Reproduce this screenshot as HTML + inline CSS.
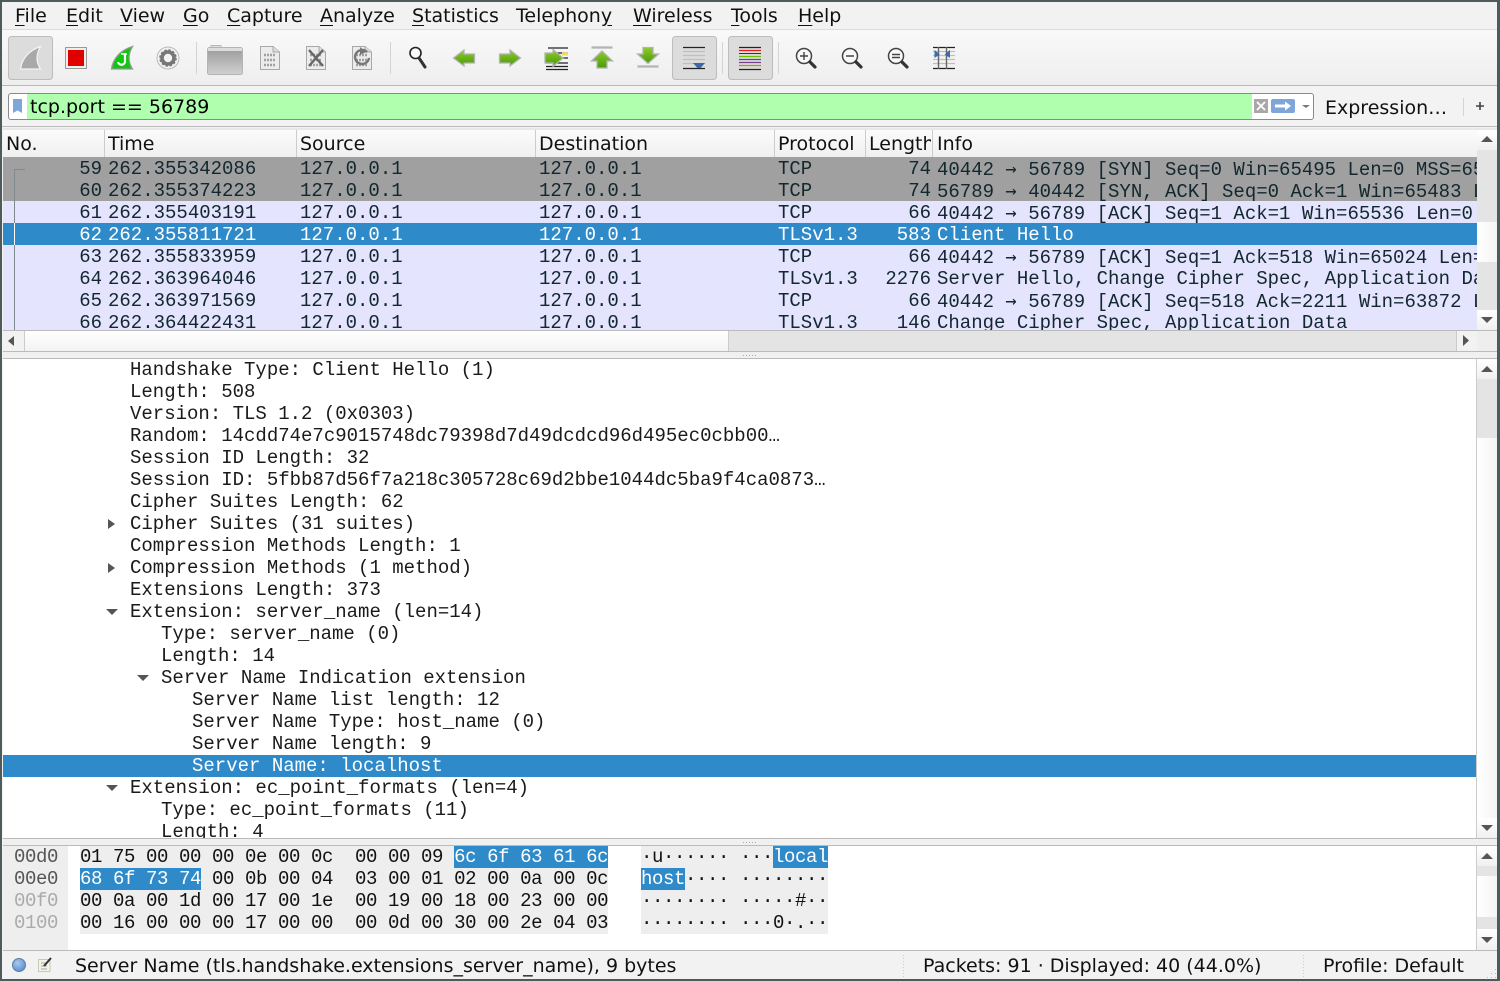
<!DOCTYPE html>
<html><head><meta charset="utf-8"><style>
html,body{margin:0;padding:0;width:1500px;height:981px;overflow:hidden;background:#4e5a5c}
*{box-sizing:border-box}
.a{position:absolute}
#w{position:absolute;left:2px;top:2px;width:1495px;height:977px;background:#f2f2f2;overflow:hidden}
#r{position:absolute;left:0;top:0;width:1500px;height:981px;font-family:"DejaVu Sans","Liberation Sans",sans-serif;font-size:19px;color:#111}
.m{position:absolute;top:4px;height:24px;line-height:24px;white-space:pre}
.m u{text-underline-offset:3px}
.h{position:absolute;top:131px;height:26px;line-height:27px;white-space:pre;overflow:hidden}
.s{position:absolute;top:130px;width:1px;height:27px;background:#ccc}
.row{position:absolute;left:3px;width:1474px;height:22px;overflow:hidden;font-family:"Liberation Mono",monospace;font-size:19px;line-height:24px;color:#12272e;white-space:pre}
.row span{position:absolute;top:0}
.row b{font-weight:normal;font-family:"DejaVu Sans Mono",monospace;font-size:18.9px}
.no{left:0;width:99px;text-align:right}.t{left:105px}.src{left:297px}.dst{left:536px}.pr{left:775px}.len{left:862px;width:66px;text-align:right}.inf{left:934px}
.g{background:#a0a0a0}.l{background:#e4e4ff}.sel{background:#2f8ac9;color:#fff}
.d{position:absolute;left:3px;width:1474px;height:22px;font-family:"Liberation Mono",monospace;font-size:19px;line-height:22px;color:#1a1a1a;white-space:pre;overflow:hidden}
.x{position:absolute;height:22px;font-family:"Liberation Mono",monospace;font-size:19px;letter-spacing:-.4px;line-height:22px;white-space:pre;color:#111}
.x i{font-style:normal}
.hs{background:#2f8ac9;color:#fff;display:inline-block;height:22px;line-height:22px;vertical-align:top}
.b{position:absolute;left:1477px;width:20px;height:20px;background:linear-gradient(#fff,#f0f0f0)}
.tr{position:absolute;background:#e4e4e4}
.hd{position:absolute;background:linear-gradient(90deg,#fff,#f4f4f4)}
</style></head><body>
<div id="w"></div>
<div id="r">
<!-- menu -->
<div class="m" style="left:15px"><u>F</u>ile</div>
<div class="m" style="left:66px"><u>E</u>dit</div>
<div class="m" style="left:120px"><u>V</u>iew</div>
<div class="m" style="left:183px"><u>G</u>o</div>
<div class="m" style="left:227px"><u>C</u>apture</div>
<div class="m" style="left:320px"><u>A</u>nalyze</div>
<div class="m" style="left:412px"><u>S</u>tatistics</div>
<div class="m" style="left:516px">Telephon<u>y</u></div>
<div class="m" style="left:633px"><u>W</u>ireless</div>
<div class="m" style="left:731px"><u>T</u>ools</div>
<div class="m" style="left:798px"><u>H</u>elp</div>
<!-- toolbar -->
<div class="a" style="left:2px;top:29px;width:1495px;height:57px;background:linear-gradient(#f9f9f9,#eeeeee);border-top:1px solid #ddd;border-bottom:1px solid #b8b8b8"></div>
<svg class="a" style="left:0;top:0" width="1500" height="90" viewBox="0 0 1500 90">
<defs>
<linearGradient id="gr" x1="0" y1="0" x2="0" y2="1"><stop offset="0" stop-color="#8ecb2a"/><stop offset="1" stop-color="#4a9a08"/></linearGradient>
<linearGradient id="fo" x1="0" y1="0" x2="0" y2="1"><stop offset="0" stop-color="#999"/><stop offset=".6" stop-color="#bbb"/><stop offset="1" stop-color="#d0d0d0"/></linearGradient>
</defs>
<g fill="#dcdcdc" stroke="#bcbcbc"><rect x="8.5" y="36.5" width="44" height="43" rx="3"/><rect x="672.5" y="36.5" width="44" height="43" rx="3"/><rect x="728.5" y="36.5" width="44" height="43" rx="3"/></g>
<g stroke="#d4d4d4"><path d="M196.5 42V74M390.5 42V74M722.5 42V74M778.5 42V74"/></g>
<path d="M20.5 69C22 58 30 50 40.5 46.5C36 54 36 62 40.5 69Z" fill="#a9a9a9" stroke="#f4f4f4" stroke-width="1.2"/>
<rect x="65.5" y="47.5" width="21" height="21" fill="#eee" stroke="#999"/><rect x="68" y="50" width="16" height="16" fill="#e00000"/>
<path d="M111.5 69C113 58 121 50 132.5 46.5C128 54 128 62 132.5 69Z" fill="#0dc80d" stroke="#999" stroke-width="1.3"/>
<path d="M125 53V62A3.6 3.6 0 0 1 118 62" fill="none" stroke="#fff" stroke-width="2.2"/><path d="M121 54h6" stroke="#fff" stroke-width="1.5"/>
<circle cx="168" cy="58" r="11" fill="#f2f2f2" stroke="#bbb"/><circle cx="168" cy="58" r="6" fill="none" stroke="#777" stroke-width="3.6"/><circle cx="168" cy="58" r="8" fill="none" stroke="#777" stroke-width="1.6" stroke-dasharray="2.4 1.8"/>
<path d="M211 48V45.5H221V48" fill="#ddd" stroke="#bbb"/>
<rect x="207.5" y="47.5" width="35" height="27" rx="2" fill="url(#fo)" stroke="#b4b4b4"/><rect x="208" y="48" width="34" height="3" fill="#ddd"/>
<g id="fl"><path d="M260.5 46.5H273L279.5 52V69.5H260.5Z" fill="#ececec" stroke="#a8a8a8"/><path d="M273 46.5V52H279.5" fill="#ddd" stroke="#a8a8a8"/><path d="M264 55h12M264 60h12M264 65h12" stroke="#a0a0a0" stroke-width="2.4" stroke-dasharray="2 1"/></g>
<use href="#fl" x="46"/><use href="#fl" x="92"/>
<path d="M309 50L323 66M323 50L309 66" stroke="#666" stroke-width="2.4"/>
<path d="M367 52A7 7 0 1 0 369 58" fill="none" stroke="#777" stroke-width="2.4"/><path d="M360 47L366 52L360 55Z" fill="#777"/>
<circle cx="415.5" cy="53" r="5.5" fill="#f8f8f8" stroke="#222" stroke-width="1.6"/><path d="M419 58L425 67" stroke="#333" stroke-width="3" stroke-linecap="round"/>
<path id="al" d="M453.5 58L464 50V54H474.5V63H464V66Z" fill="url(#gr)" stroke="#b4b4b4" stroke-width="1.3"/>
<path d="M520.5 58L510 50V54H499.5V63H510V66Z" fill="url(#gr)" stroke="#b4b4b4" stroke-width="1.3"/>
<path d="M548 48H568M556 53H568M548 58H568M546 63H568M546 66.5H568M546 69.5H568" stroke="#222" stroke-width="1.2"/><rect x="562" y="52.5" width="6" height="3" fill="#f0e050"/>
<path d="M563 58L553 49.5V53H545V63H553V66.5Z" fill="url(#gr)" stroke="#b4b4b4" stroke-width="1.3"/>
<path d="M591.5 47.5H612.5" stroke="#b4b4b4" stroke-width="2.2"/>
<path d="M602 51L612.5 61H607V68H597V61H591.5Z" fill="url(#gr)" stroke="#b4b4b4" stroke-width="1.3"/>
<path d="M637.5 66.5H658.5" stroke="#b4b4b4" stroke-width="2.2"/>
<path d="M648 63.5L658.5 54H653V47.5H643V54H637.5Z" fill="url(#gr)" stroke="#b4b4b4" stroke-width="1.3"/>
<path d="M683 47.5H705M683 68.5H705" stroke="#222" stroke-width="1.2"/><path d="M683 51.5H705M683 55.5H705M683 59.5H705M683 63.5H705" stroke="#c0c0b8" stroke-width="1.2"/>
<path d="M693 63H705L700.5 68H697.5Z" fill="#3a67a8"/>
<path d="M739 47.5H761M739 69.5H761" stroke="#222" stroke-width="1.2"/>
<path d="M739 50.5H761" stroke="#e02020" stroke-width="1.2"/><path d="M739 53.5H761" stroke="#333" stroke-width="1"/><path d="M739 56.5H761" stroke="#70c000" stroke-width="1.2"/><path d="M739 59.5H761" stroke="#3a5a9a" stroke-width="1.2"/><path d="M739 62.5H761" stroke="#7a3f8a" stroke-width="1.2"/><path d="M739 65.5H761" stroke="#c09000" stroke-width="1.2"/>
<g id="zm"><circle cx="804" cy="56" r="7.5" fill="#f8f8f8" stroke="#444" stroke-width="1.5"/><path d="M810 62L815 67" stroke="#333" stroke-width="3.2" stroke-linecap="round"/></g>
<path d="M800 56H808M804 52V60" stroke="#444" stroke-width="1.4"/>
<use href="#zm" x="46"/><path d="M846 56H854" stroke="#444" stroke-width="1.5"/>
<use href="#zm" x="92"/><path d="M892 54.5H900M892 57.5H900" stroke="#444" stroke-width="1.4"/>
<path d="M933 51.5H955M933 55.5H955M933 59.5H955M933 63.5H955" stroke="#c0c0b8" stroke-width="1.2"/>
<path d="M933 47.5H955M933 68.5H955" stroke="#222" stroke-width="1.2"/><path d="M938.5 47V69M946.5 47V69" stroke="#666" stroke-width="1.4"/>
<path d="M935 51L939 54.5L935 57ZM949.5 51L945.5 54.5L949.5 57Z" fill="#3a6ab0" stroke="#3a6ab0"/>
</svg>
<!-- filter bar -->
<div class="a" style="left:2px;top:86px;width:1495px;height:41px;background:#f3f3f3;border-bottom:1px solid #bbb"></div>
<div class="a" style="left:8px;top:93px;width:1306px;height:27px;background:#fff;border:1px solid #8a8a8a;border-radius:3px"></div>
<div class="a" style="left:27px;top:94px;width:1225px;height:25px;background:#afffaf"></div>
<div class="a" style="left:30px;top:95px;height:25px;line-height:25px;white-space:pre;color:#000">tcp.port == 56789</div>
<svg class="a" style="left:0;top:90px" width="1500" height="30">
<path d="M13 9H22V23L17.5 20.5L13 23Z" fill="#7fa6d8"/>
<rect x="1254" y="9" width="14" height="14" fill="#a8a8a8"/><path d="M1257 12L1265 20M1265 12L1257 20" stroke="#fff" stroke-width="1.8"/>
<rect x="1271" y="9" width="24" height="14" rx="2" fill="#7fa6d8"/><path d="M1275 16H1287" stroke="#fff" stroke-width="3"/><path d="M1285 11.5L1291 16L1285 20.5Z" fill="#fff"/>
<path d="M1302 15H1310L1306 18Z" fill="#777"/>
<path d="M1463.5 8V26" stroke="#d4d4d4"/><path d="M1476 16H1484M1480 12V20" stroke="#444" stroke-width="1.6"/>
</svg>
<div class="a" style="left:1325px;top:96px;height:25px;line-height:25px;white-space:pre">Expression…</div>
<!-- packet list -->
<div class="a" style="left:3px;top:128px;width:1494px;height:2px;background:#e8e8e8"></div>
<div class="a" style="left:3px;top:130px;width:1474px;height:27px;background:linear-gradient(#fbfbfb,#f0f0f0)"></div>
<div class="h" style="left:6px">No.</div><div class="h" style="left:108px">Time</div><div class="h" style="left:300px">Source</div><div class="h" style="left:539px">Destination</div><div class="h" style="left:778px">Protocol</div><div class="h" style="left:869px;width:62px">Length</div><div class="h" style="left:937px">Info</div>
<div class="s" style="left:104px"></div><div class="s" style="left:296px"></div><div class="s" style="left:535px"></div><div class="s" style="left:774px"></div><div class="s" style="left:865px"></div><div class="s" style="left:932px"></div>
<div class="row g" style="top:157px"><span class="no">59</span><span class="t">262.355342086</span><span class="src">127.0.0.1</span><span class="dst">127.0.0.1</span><span class="pr">TCP</span><span class="len">74</span><span class="inf">40442 <b>→</b> 56789 [SYN] Seq=0 Win=65495 Len=0 MSS=65495 SACK_PERM=1</span></div>
<div class="row g" style="top:179px"><span class="no">60</span><span class="t">262.355374223</span><span class="src">127.0.0.1</span><span class="dst">127.0.0.1</span><span class="pr">TCP</span><span class="len">74</span><span class="inf">56789 <b>→</b> 40442 [SYN, ACK] Seq=0 Ack=1 Win=65483 Len=0 MSS=65495</span></div>
<div class="row l" style="top:201px"><span class="no">61</span><span class="t">262.355403191</span><span class="src">127.0.0.1</span><span class="dst">127.0.0.1</span><span class="pr">TCP</span><span class="len">66</span><span class="inf">40442 <b>→</b> 56789 [ACK] Seq=1 Ack=1 Win=65536 Len=0 TSval=1</span></div>
<div class="row sel" style="top:223px"><span class="no">62</span><span class="t">262.355811721</span><span class="src">127.0.0.1</span><span class="dst">127.0.0.1</span><span class="pr">TLSv1.3</span><span class="len">583</span><span class="inf">Client Hello</span></div>
<div class="row l" style="top:245px"><span class="no">63</span><span class="t">262.355833959</span><span class="src">127.0.0.1</span><span class="dst">127.0.0.1</span><span class="pr">TCP</span><span class="len">66</span><span class="inf">40442 <b>→</b> 56789 [ACK] Seq=1 Ack=518 Win=65024 Len=0 TSval=1</span></div>
<div class="row l" style="top:267px"><span class="no">64</span><span class="t">262.363964046</span><span class="src">127.0.0.1</span><span class="dst">127.0.0.1</span><span class="pr">TLSv1.3</span><span class="len">2276</span><span class="inf">Server Hello, Change Cipher Spec, Application Data, Application Data</span></div>
<div class="row l" style="top:289px"><span class="no">65</span><span class="t">262.363971569</span><span class="src">127.0.0.1</span><span class="dst">127.0.0.1</span><span class="pr">TCP</span><span class="len">66</span><span class="inf">40442 <b>→</b> 56789 [ACK] Seq=518 Ack=2211 Win=63872 Len=0 TSval</span></div>
<div class="row l" style="top:311px;height:19px"><span class="no">66</span><span class="t">262.364422431</span><span class="src">127.0.0.1</span><span class="dst">127.0.0.1</span><span class="pr">TLSv1.3</span><span class="len">146</span><span class="inf">Change Cipher Spec, Application Data</span></div>
<div class="a" style="left:14px;top:169px;width:11px;height:1px;background:#7f8c8d"></div>
<div class="a" style="left:14px;top:169px;width:1px;height:54px;background:#7f8c8d"></div>
<div class="a" style="left:14px;top:223px;width:1px;height:22px;background:#fff"></div>
<div class="a" style="left:14px;top:245px;width:1px;height:85px;background:#7f8c8d"></div>
<!-- list v scroll -->
<div class="tr" style="left:1477px;top:150px;width:20px;height:160px"></div>
<div class="hd" style="left:1477px;top:222px;width:20px;height:40px"></div>
<div class="b" style="top:130px"></div><div class="b" style="top:310px"></div>
<!-- h scroll -->
<div class="a" style="left:3px;top:330px;width:1494px;height:1px;background:#bbb"></div>
<div class="tr" style="left:729px;top:331px;width:727px;height:20px"></div>
<div class="a" style="left:24px;top:331px;width:705px;height:20px;background:linear-gradient(#fff,#f3f3f3);border-left:1px solid #ccc;border-right:1px solid #ccc"></div>
<div class="a" style="left:3px;top:331px;width:20px;height:20px;background:#f2f2f2"></div>
<div class="a" style="left:1456px;top:331px;width:20px;height:20px;background:#f2f2f2;border-left:1px solid #ccc"></div>
<div class="a" style="left:1477px;top:331px;width:20px;height:20px;background:#eee"></div>
<div class="a" style="left:3px;top:351px;width:1494px;height:1px;background:#bbb"></div>
<div class="a" style="left:3px;top:352px;width:1494px;height:6px;background:#f0f0f0"></div>
<div class="a" style="left:3px;top:358px;width:1494px;height:1px;background:#bbb"></div>
<!-- details -->
<div class="a" style="left:3px;top:359px;width:1474px;height:479px;background:#fff"></div>
<div class="d" style="top:359px;padding-left:127px">Handshake Type: Client Hello (1)</div>
<div class="d" style="top:381px;padding-left:127px">Length: 508</div>
<div class="d" style="top:403px;padding-left:127px">Version: TLS 1.2 (0x0303)</div>
<div class="d" style="top:425px;padding-left:127px">Random: 14cdd74e7c9015748dc79398d7d49dcdcd96d495ec0cbb00…</div>
<div class="d" style="top:447px;padding-left:127px">Session ID Length: 32</div>
<div class="d" style="top:469px;padding-left:127px">Session ID: 5fbb87d56f7a218c305728c69d2bbe1044dc5ba9f4ca0873…</div>
<div class="d" style="top:491px;padding-left:127px">Cipher Suites Length: 62</div>
<div class="d" style="top:513px;padding-left:127px">Cipher Suites (31 suites)</div>
<div class="d" style="top:535px;padding-left:127px">Compression Methods Length: 1</div>
<div class="d" style="top:557px;padding-left:127px">Compression Methods (1 method)</div>
<div class="d" style="top:579px;padding-left:127px">Extensions Length: 373</div>
<div class="d" style="top:601px;padding-left:127px">Extension: server_name (len=14)</div>
<div class="d" style="top:623px;padding-left:158px">Type: server_name (0)</div>
<div class="d" style="top:645px;padding-left:158px">Length: 14</div>
<div class="d" style="top:667px;padding-left:158px">Server Name Indication extension</div>
<div class="d" style="top:689px;padding-left:189px">Server Name list length: 12</div>
<div class="d" style="top:711px;padding-left:189px">Server Name Type: host_name (0)</div>
<div class="d" style="top:733px;padding-left:189px">Server Name length: 9</div>
<div class="d" style="top:755px;padding-left:189px;background:#2f8ac9;color:#fff">Server Name: localhost</div>
<div class="d" style="top:777px;padding-left:127px">Extension: ec_point_formats (len=4)</div>
<div class="d" style="top:799px;padding-left:158px">Type: ec_point_formats (11)</div>
<div class="d" style="top:821px;height:17px;padding-left:158px">Length: 4</div>
<svg class="a" style="left:0;top:0;z-index:2" width="1500" height="981">
<g fill="#555">
<path d="M108 519L115 524L108 529Z"/><path d="M108 563L115 568L108 573Z"/>
<path d="M106 609H118L112 615Z"/><path d="M137 675H149L143 681Z"/><path d="M106 785H118L112 791Z"/>
</g>
<g fill="#555">
<path d="M1481 142L1487 136L1493 142Z"/><path d="M1481 317H1493L1487 323Z"/>
<path d="M1481 372H1493L1487 366Z"/><path d="M1481 825H1493L1487 831Z"/>
<path d="M1481 859H1493L1487 853Z"/><path d="M1481 937H1493L1487 943Z"/>
<path d="M14 336V346L8 341Z"/><path d="M1463 335V346L1469 340.5Z"/>
</g>
<g fill="#aaa"><path d="M743 355h1v1h-1zM746 355h1v1h-1zM749 355h1v1h-1zM752 355h1v1h-1zM755 355h1v1h-1zM743 842h1v1h-1zM746 842h1v1h-1zM749 842h1v1h-1zM752 842h1v1h-1zM755 842h1v1h-1z"/></g>
</svg>
<!-- details scroll -->
<div class="b" style="top:359px"></div><div class="b" style="top:818px"></div>
<div class="tr" style="left:1477px;top:379px;width:20px;height:59px"></div>
<div class="hd" style="left:1477px;top:438px;width:20px;height:380px"></div>
<div class="a" style="left:1476px;top:359px;width:1px;height:479px;background:#ccc"></div>
<!-- splitter 2 -->
<div class="a" style="left:3px;top:838px;width:1494px;height:1px;background:#bbb"></div>
<div class="a" style="left:3px;top:839px;width:1494px;height:6px;background:#f0f0f0"></div>
<div class="a" style="left:3px;top:845px;width:1494px;height:1px;background:#bbb"></div>
<!-- hex -->
<div class="a" style="left:3px;top:846px;width:1474px;height:104px;background:#fff"></div>
<div class="a" style="left:3px;top:846px;width:65px;height:104px;background:#eeeeee"></div>
<div class="a" style="left:80px;top:846px;width:528px;height:88px;background:#eeeeee"></div>
<div class="a" style="left:641px;top:846px;width:187px;height:88px;background:#eeeeee"></div>
<div class="x" style="left:14px;top:846px;color:#555">00d0</div>
<div class="x" style="left:14px;top:868px;color:#555">00e0</div>
<div class="x" style="left:14px;top:890px;color:#aaa">00f0</div>
<div class="x" style="left:14px;top:912px;color:#aaa">0100</div>
<div class="x" style="left:80px;top:846px">01 75 00 00 00 0e 00 0c  00 00 09 <i class="hs">6c 6f 63 61 6c</i></div>
<div class="x" style="left:80px;top:868px"><i class="hs">68 6f 73 74</i> 00 0b 00 04  03 00 01 02 00 0a 00 0c</div>
<div class="x" style="left:80px;top:890px">00 0a 00 1d 00 17 00 1e  00 19 00 18 00 23 00 00</div>
<div class="x" style="left:80px;top:912px">00 16 00 00 00 17 00 00  00 0d 00 30 00 2e 04 03</div>
<div class="x" style="left:641px;top:846px">·u······ ···<i class="hs">local</i></div>
<div class="x" style="left:641px;top:868px"><i class="hs">host</i>···· ········</div>
<div class="x" style="left:641px;top:890px">········ ·····#··</div>
<div class="x" style="left:641px;top:912px">········ ···0·.··</div>
<div class="b" style="top:846px"></div><div class="b" style="top:929px;height:21px"></div>
<div class="tr" style="left:1477px;top:866px;width:20px;height:63px"></div>
<div class="hd" style="left:1477px;top:876px;width:20px;height:41px"></div>
<div class="a" style="left:1476px;top:846px;width:1px;height:104px;background:#ccc"></div>
<!-- status -->
<div class="a" style="left:3px;top:950px;width:1494px;height:1px;background:#bbb"></div>
<div class="a" style="left:75px;top:954px;height:25px;line-height:25px;white-space:pre">Server Name (tls.handshake.extensions_server_name), 9 bytes</div>
<div class="a" style="left:923px;top:954px;height:25px;line-height:25px;white-space:pre">Packets: 91 · Displayed: 40 (44.0%)</div>
<div class="a" style="left:1323px;top:954px;height:25px;line-height:25px;white-space:pre">Profile: Default</div>
<svg class="a" style="left:0;top:950px" width="1500" height="31">
<defs><radialGradient id="bl" cx=".4" cy=".35" r=".7"><stop offset="0" stop-color="#a8c8f0"/><stop offset="1" stop-color="#5a8ccc"/></radialGradient></defs>
<circle cx="19" cy="15" r="6.5" fill="url(#bl)" stroke="#5c7ea8"/>
<path d="M38.5 9.5H50V21.5H38.5Z" fill="#f4f4e4" stroke="#c8c8b8"/><path d="M41 13H47M41 16H47M41 19H47" stroke="#9ab" stroke-width="1"/><path d="M44 16L51 8" stroke="#333" stroke-width="2"/>
<path d="M903.5 5V27M1303.5 5V27" stroke="#ccc" stroke-dasharray="1 2"/>
<path d="M1487 27h1v1h-1zM1491 27h1v1h-1zM1495 27h1v1h-1zM1491 23h1v1h-1zM1495 23h1v1h-1zM1495 19h1v1h-1z" fill="#bbb"/>
</svg>
</div>
</body></html>
